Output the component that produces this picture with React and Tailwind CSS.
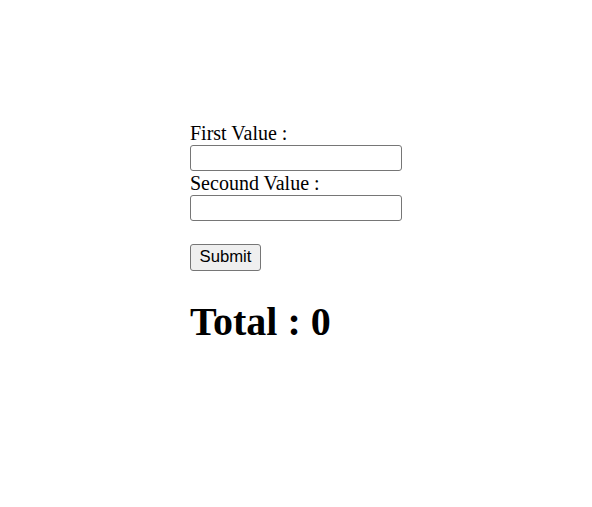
import React, { useState } from "react";

export default function App() {
  const [first, setFirst] = useState("");
  const [second, setSecond] = useState("");
  const [total, setTotal] = useState(0);

  const handleSubmit = (e) => {
    e.preventDefault();
    setTotal(Number(first) + Number(second));
  };

  return (
    <div className="min-h-screen bg-white pl-[190px] pt-[121px] font-['Liberation_Serif',serif] text-black">
      <form onSubmit={handleSubmit} className="flex flex-col items-start">
        <label className="text-[20px] leading-[24px]">First Value :</label>
        <input
          type="text"
          value={first}
          onChange={(e) => setFirst(e.target.value)}
          className="h-[26px] w-[212px] rounded-[3px] border border-[#767676] bg-white px-[2px] outline-none"
        />
        <label className="text-[20px] leading-[24px]">Secound Value :</label>
        <input
          type="text"
          value={second}
          onChange={(e) => setSecond(e.target.value)}
          className="h-[26px] w-[212px] rounded-[3px] border border-[#767676] bg-white px-[2px] outline-none"
        />
        <button
          type="submit"
          className="mt-[23px] h-[27px] w-[71px] rounded-[3px] border border-[#767676] bg-[#efefef] font-['Liberation_Sans',sans-serif] text-[16.7px] leading-none text-black"
        >
          Submit
        </button>
      </form>
      <h1 className="mt-[28px] text-[40px] font-bold leading-[46px]">
        Total : {total}
      </h1>
    </div>
  );
}
